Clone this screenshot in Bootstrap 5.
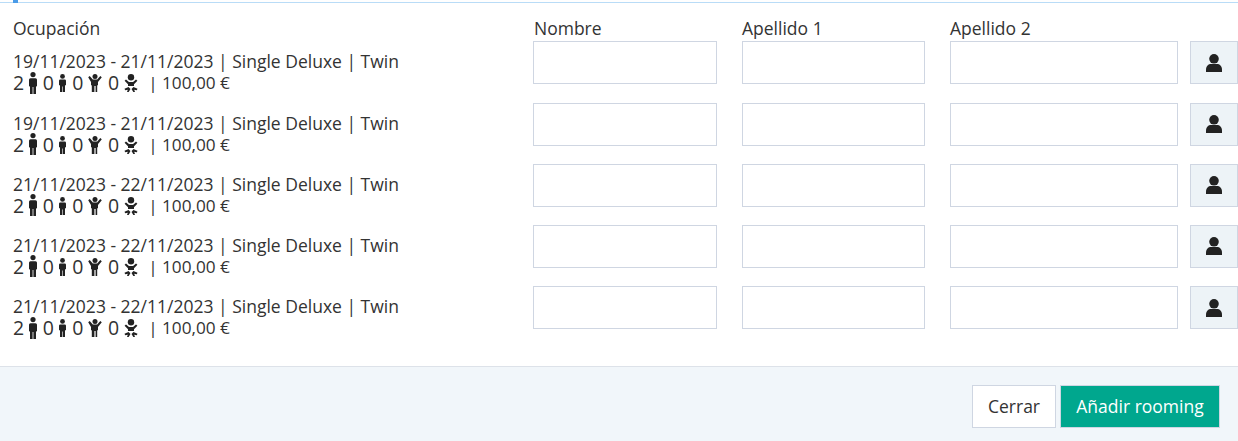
<!DOCTYPE html>
<html lang="es">
<head>
    <meta charset="UTF-8" />
    <title>Rooming</title>
    <link href="https://cdn.jsdelivr.net/npm/bootstrap@5.3.0/dist/css/bootstrap.min.css" rel="stylesheet" />
    <style>
        html, body { height: 441px; overflow: hidden; }
        body { background: #fff; color: #333; font-family: "Open Sans", sans-serif; font-size: 17.5px; position: relative; }
        .top-line { height: 3px; border-bottom: 1px solid #b9dcf7; }
        .top-tab { position: absolute; left: 13px; top: 0; width: 5px; height: 3px; background: #4a9be8; }
        .room-body { padding: 13px 0 0 13px; height: 363px; }
        .head-row { height: 25.4px; line-height: 25px; }
        .room-row { height: 61.2px; }
        .col-occ { width: 520px; flex: none; }
        .col-a { width: 184px; flex: none; }
        .head-a { padding-left: 1px; }
        .col-b { margin-left: 25px; width: 183px; flex: none; }
        .col-c { margin-left: 25px; width: 228px; flex: none; }
        .room-info { line-height: 22px; padding-top: 9px; white-space: nowrap; }
        .room-sub { height: 22px; }
        .room-num { font-size: 19.5px; }
        .room-sub svg { display: block; fill: #222; }
        .ico-a { margin: -1px 5.5px 0 5px; }
        .ico-t { margin: 0 6px 0 5.5px; }
        .ico-c { margin: 0 5.5px 0 5px; }
        .ico-b { margin: 0 0 0 4.5px; }
        .room-price { margin-left: 10.5px; font-size: 17.2px; }
        .room-input { width: 100%; height: 43px; border: 1px solid #cfd6e2; border-radius: 0; background: #fff; display: block; }
        .person-btn { width: 48px; height: 43px; margin-left: 12px; padding: 0; border: 1px solid #cfd6e2; border-radius: 0; background: #edf3f7; }
        .person-btn svg { display: block; fill: #222; }
        .room-foot { height: 75px; background: #f1f6fa; border-top: 1px solid #dde2e9; padding: 18px 18px 0 0; gap: 4px; }
        .foot-btn { height: 43px; border-radius: 0; border: 1px solid #cfd6e2; font-size: 17.5px; padding: 0; }
        .foot-close { background: #fff; color: #333; width: 84px; }
        .foot-add { background: #00a78e; color: #fff; width: 160px; }
        .foot-close:hover { background: #fff; }
        .foot-add:hover { background: #00a78e; color: #fff; }
    </style>
</head>
<body>
    <div class="top-line"></div>
    <div class="top-tab"></div>

    <div class="room-body">
        <div class="d-flex head-row">
            <div class="col-occ">Ocupación</div>
            <div class="col-a head-a">Nombre</div>
            <div class="col-b">Apellido 1</div>
            <div class="col-c">Apellido 2</div>
        </div>
        <div id="rooms"></div>
    </div>

    <div class="room-foot d-flex justify-content-end">
        <button class="btn foot-btn foot-close">Cerrar</button>
        <button class="btn foot-btn foot-add">Añadir rooming</button>
    </div>

    <script>
        const fechas = ['19/11/2023 - 21/11/2023', '19/11/2023 - 21/11/2023', '21/11/2023 - 22/11/2023', '21/11/2023 - 22/11/2023', '21/11/2023 - 22/11/2023'];
        const adulto = '<svg class="ico-a" width="8" height="22" viewBox="0 0 8 22"><circle cx="4" cy="2.600" r="2.600"/><path d="M1.500 6.200h5A1.500 1.500 0 0 1 8 7.700V14l-1 .8V22H4.400v-7h-.8v7H1v-7.200L0 14V7.700a1.500 1.500 0 0 1 1.500-1.500z"/></svg>';
        const joven = '<svg class="ico-t" width="7" height="18" viewBox="0 0 7 18"><circle cx="3.500" cy="2.400" r="2.400"/><path d="M1.300 5.500h4.400A1.300 1.300 0 0 1 7 6.800V11l-1 .6V18H3.800v-5.500h-.6V18H1v-6.400L0 11V6.800a1.300 1.300 0 0 1 1.300-1.300z"/></svg>';
        const nino = '<svg class="ico-c" width="14" height="18" viewBox="0 0 14 18"><circle cx="7" cy="2.500" r="2.500"/><path d="M.2 3.200L1.700 2l3.100 3.600h4.400L12.300 2l1.500 1.200-3.800 4.800V11l-.8.600V18H7.600v-6h-1.200v6H3.800v-6.400L3 11V8z"/></svg>';
        const bebe = '<svg class="ico-b" width="14" height="18" viewBox="0 0 14 18"><circle cx="7" cy="3.200" r="3.200"/><path d="M.6 6.800L2 5.600l3 2.400h4l3-2.400 1.400 1.200-3.400 3.400v1.800H4v-1.800z"/><path d="M.5 14.800l4-1.700 2 1.900-1.800 3H3l.8-2.200-2.600.4zM13.500 14.800l-4-1.700-2 1.900 1.800 3H11l-.8-2.200 2.600.4z"/></svg>';
        document.getElementById('rooms').innerHTML = fechas.map(f => `
            <div class="d-flex align-items-start room-row">
                <div class="col-occ room-info">
                    <div>${f} | Single Deluxe | Twin</div>
                    <div class="room-sub d-flex align-items-center">
                        <span class="room-num">2</span>${adulto}<span class="room-num">0</span>${joven}<span class="room-num">0</span>${nino}<span class="room-num">0</span>${bebe}
                        <span class="room-price">| 100,00 €</span>
                    </div>
                </div>
                <div class="col-a"><input class="room-input" type="text" /></div>
                <div class="col-b"><input class="room-input" type="text" /></div>
                <div class="col-c"><input class="room-input" type="text" /></div>
                <button class="person-btn d-flex align-items-center justify-content-center" type="button">
                    <svg width="16" height="18" viewBox="0 0 16 18"><circle cx="8" cy="4.800" r="4.800"/><path d="M0 18v-2.500C0 12 2.500 10 5 10h6c2.500 0 5 2 5 5.500V18z"/></svg>
                </button>
            </div>`).join('');
    </script>
    <script src="https://cdn.jsdelivr.net/npm/bootstrap@5.3.0/dist/js/bootstrap.bundle.min.js"></script>
</body>
</html>
